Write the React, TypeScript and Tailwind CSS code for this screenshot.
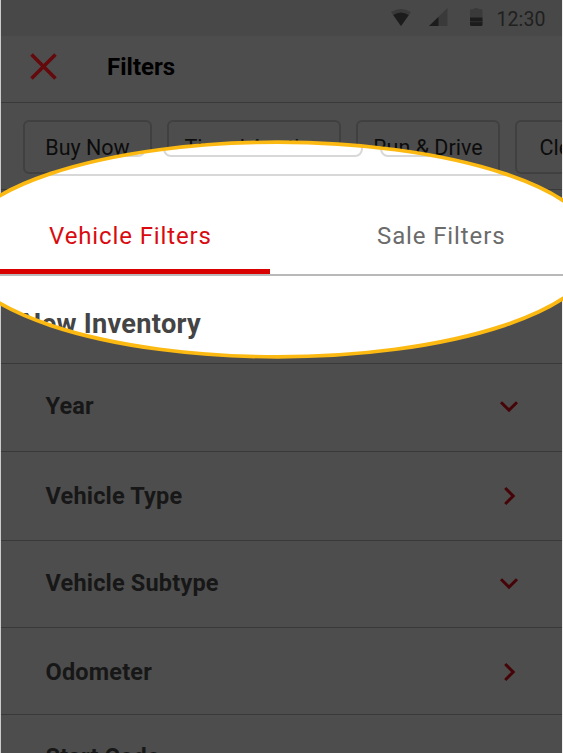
type RowProps = { label: string; height: string; open?: boolean; shift?: string };

function Chevron({ down }: { down?: boolean }) {
  return (
    <svg width="20" height="20" viewBox="0 0 20 20" fill="none" stroke="#450408" strokeWidth="3">
      {down ? <path d="M2 6.2 10 14.2 18 6.2" /> : <path d="M6.2 2 14.2 10 6.2 18" />}
    </svg>
  );
}

function Row({ label, height, open, shift = "" }: RowProps) {
  return (
    <div className={`flex shrink-0 items-center justify-between border-b border-[#393939] pl-[44.5px] pr-[43px] ${height} ${shift}`}>
      <span className="text-[23.5px] font-bold leading-7 tracking-[0.18px] text-[#171717]">{label}</span>
      <Chevron down={open} />
    </div>
  );
}

function Chip({ label, width }: { label: string; width: string }) {
  return (
    <div className={`flex h-[54px] shrink-0 items-center justify-center rounded-md border-2 border-[#404040] pt-[2px] text-[21.5px] text-[#0c0c0c] ${width}`}>
      {label}
    </div>
  );
}

function StatusBar() {
  return (
    <div className="flex h-9 shrink-0 items-center justify-end bg-[#484848] pr-[16.5px] text-[#202020]">
      <svg className="mr-[17px]" width="22" height="20" viewBox="0 0 22 20">
        <path d="M1 4Q11-2 21 4L11 18Z" fill="#393939" />
        <path d="M3.2 7Q11 2 18.8 7L11 18Z" fill="#1c1c1c" />
      </svg>
      <svg className="mr-[22px]" width="19" height="20" viewBox="0 0 19 20">
        <path d="M0 18 18.5 0V18Z" fill="#3a3a3a" />
        <path d="M0 18 9.5 9V18Z" fill="#1c1c1c" />
      </svg>
      <svg className="mr-[13px]" width="13" height="20" viewBox="0 0 13 20">
        <path d="M0 2.5Q0 1.2 1.5 1.2H3Q6 -1.2 9.5 1.2H11.5Q12.5 1.2 12.5 2.5V10H0Z" fill="#3a3a3a" />
        <path d="M0 9.5H12.5V16.5Q12.5 18 11 18H1.5Q0 18 0 16.5Z" fill="#1c1c1c" />
        <path d="M0 13.7H12.5" stroke="#303030" />
      </svg>
      <span className="pt-[3px] text-[19.5px] leading-6 tracking-[0.1px]">12:30</span>
    </div>
  );
}

function Lens() {
  return (
    <div className="absolute inset-0">
      <div className="flex h-full flex-col bg-white [clip-path:ellipse(321px_107.5px_at_277.5px_249.5px)]">
        <div className="flex h-[176px] shrink-0 items-end gap-[17px] border-b-2 border-[#d8d8d8] pb-[17px]">
          <div className="h-[60px] w-[146px] shrink-0 rounded-lg border-2 border-[#d8d8d8]" />
          <div className="h-[60px] w-[200px] shrink-0 rounded-lg border-2 border-[#d8d8d8]" />
          <div className="h-[60px] w-[160px] shrink-0 rounded-lg border-2 border-[#d8d8d8]" />
        </div>
        <div className="flex h-[100px] shrink-0 border-b-2 border-[#b9b9b9] text-[24px] leading-8 tracking-[0.88px]">
          <div className="w-[270px] border-b-5 border-[#d90000] pl-[49px] pt-[44px] text-[#d90b10]">Vehicle Filters</div>
          <div className="pl-[107px] pt-[44px] text-[#6b6b6b]">Sale Filters</div>
        </div>
        <div className="pl-[22px] pt-[32px] text-[27.2px] font-bold leading-8 tracking-[0.28px] text-[#444444]">New Inventory</div>
      </div>
      <svg className="absolute inset-0" width="563" height="753" viewBox="0 0 563 753" fill="none">
        <ellipse cx="277.5" cy="249.5" rx="321" ry="107.3" stroke="#fbb912" strokeWidth="3.7" />
      </svg>
    </div>
  );
}

export default function App() {
  return (
    <div className="relative h-[753px] w-[563px] overflow-hidden bg-[#4d4d4d] font-['Roboto',sans-serif]">
      <div className="flex h-full flex-col overflow-hidden border-l border-r border-l-[#cccccc] border-r-[#eeeeee]">
        <StatusBar />
        <header className="flex h-[67px] shrink-0 items-center border-b border-[#393939] pb-[5px] pl-[29px]">
          <svg width="27" height="27" viewBox="0 0 27 27" stroke="#650a0c" strokeWidth="3.6">
            <path d="M1.5 1.5 25.5 25.5M25.5 1.5 1.5 25.5" />
          </svg>
          <h1 className="pl-[50px] text-[24px] font-bold leading-7 text-black">Filters</h1>
        </header>
        <div className="flex h-[87px] shrink-0 gap-[15px] overflow-hidden border-b border-[#393939] pl-[22px] pt-[17px]">
          <Chip label="Buy Now" width="w-[129px]" />
          <Chip label="Timed Auction" width="w-[174px]" />
          <Chip label="Run &amp; Drive" width="w-[144px]" />
          <Chip label="Clean Title" width="w-[150px]" />
        </div>
        <div className="h-[174px] shrink-0 border-b border-[#393939]" />
        <Row label="Year" height="h-[88px]" open shift="pb-[3px]" />
        <Row label="Vehicle Type" height="h-[89px]" />
        <Row label="Vehicle Subtype" height="h-[87px]" open shift="pb-[2px]" />
        <Row label="Odometer" height="h-[87px]" shift="pt-[2px]" />
        <div className="shrink-0 pl-[44.5px] pt-[28px] text-[23.5px] font-bold leading-7 tracking-[0.18px] text-[#171717]">Start Code</div>
      </div>
      <Lens />
    </div>
  );
}
